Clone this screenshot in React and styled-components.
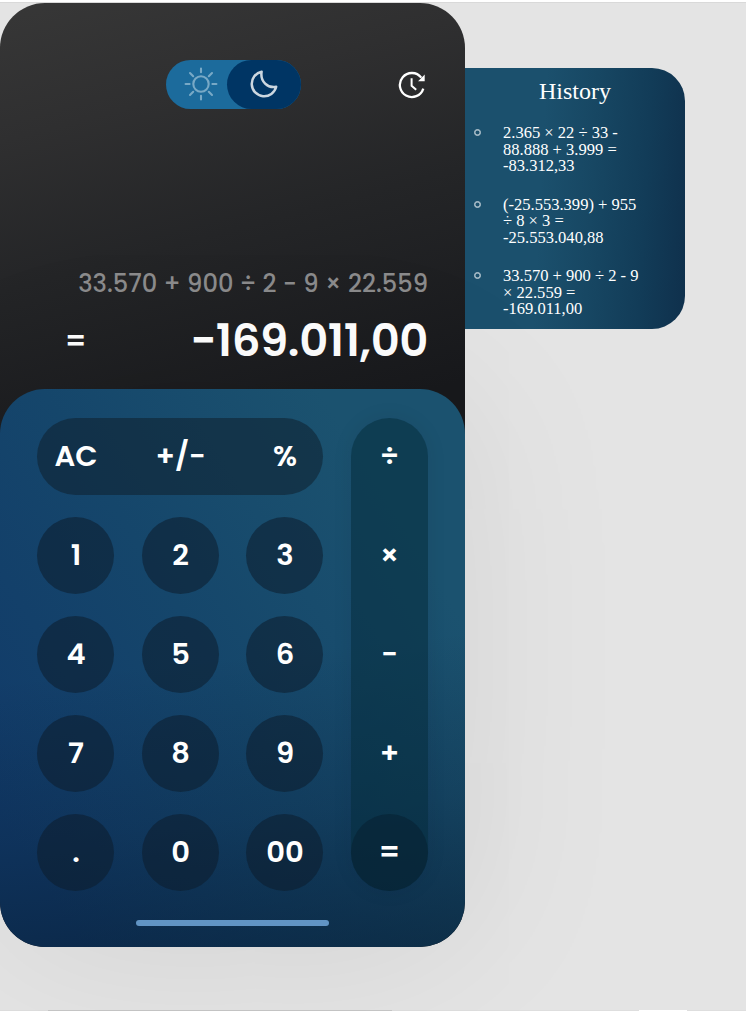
import React from "react";
import styled, { createGlobalStyle } from "styled-components";

const GlobalStyle = createGlobalStyle`
  *, *::before, *::after { box-sizing: border-box; }
  body { margin: 0; background: #e4e4e4; }
  button { border: 0; padding: 0; background: none; color: inherit; font: inherit; }
`;

const Page = styled.main`
  display: grid;
  grid-template-rows: 1008px 1px;
  height: 1011px;
  overflow: hidden;
  border-top: 2px solid #fff;
  box-shadow: inset 0 1px #d9d9d9;
`;

const Stage = styled.div`
  display: flex;
  align-items: flex-start;
  padding-top: 1px;
`;

const Calculator = styled.section`
  position: relative;
  z-index: 1;
  flex: none;
  display: flex;
  flex-direction: column;
  width: 465px;
  height: 944px;
  border-radius: 45px;
  background: linear-gradient(165deg, #373737 0%, #2f2f30 13%, #242527 27%, #18191c 47%);
  color: #fff;
  font-family: Poppins, Inter, sans-serif;
`;

const Toolbar = styled.header`
  display: grid;
  grid-template-columns: 1fr 135px 1fr;
  align-items: center;
  height: 49px;
  margin-top: 57px;
  padding-left: 2px;
`;

const ThemeSwitch = styled.div`
  grid-column: 2;
  display: flex;
  height: 49px;
  border-radius: 25px;
  background: #1c6b9c;
`;

const ThemeOption = styled.button`
  display: flex;
  align-items: center;
  justify-content: center;
  width: ${({ $active }) => ($active ? "74px" : "61px")};
  padding-left: ${({ $active }) => ($active ? "0" : "9px")};
  padding-bottom: 1px;
  border-radius: 25px;
  background: ${({ $active }) => ($active ? "#003564" : "transparent")};
  color: ${({ $active }) => ($active ? "#ccd7e0" : "#78a9c6")};
`;

const HistoryButton = styled.button`
  justify-self: end;
  display: flex;
  margin-right: 39px;
`;

const Display = styled.div`
  display: flex;
  flex-direction: column;
  height: 280px;
  padding: 151px 37px 0 65px;
`;

const Expression = styled.div`
  align-self: flex-end;
  white-space: nowrap;
  font-size: 24.2px;
  line-height: 47px;
  height: 45px;
  font-weight: 500;
  color: #8b8b8c;
`;

const Result = styled.div`
  display: flex;
  justify-content: space-between;
  align-items: center;
  height: 72px;
  font-weight: 600;
  line-height: 72px;
`;

const Equals = styled.span`
  font-size: 29px;
`;

const Value = styled.output`
  font-size: 45px;
  letter-spacing: -0.4px;
`;

const Keypad = styled.div`
  display: grid;
  grid-template-columns: 286px 77px;
  grid-template-rows: 473px;
  justify-content: space-between;
  align-content: start;
  row-gap: 29px;
  height: 558px;
  padding: 29px 37px 0;
  border-radius: 45px;
  background:
    linear-gradient(174deg, rgba(4, 20, 36, 0) 48%, rgba(4, 20, 36, 0.2) 75%, rgba(4, 20, 36, 0.5) 100%),
    linear-gradient(58deg, #113a69 10%, #15466b 48%, #1b526f 82%);
  box-shadow: 0 0 175px rgba(0, 0, 0, 0.08);
  font-size: 29px;
  font-weight: 600;
`;

const KeyRows = styled.div`
  display: flex;
  flex-direction: column;
  justify-content: space-between;
`;

const KeyRow = styled.div`
  display: flex;
  justify-content: space-between;
  border-radius: 39px;
  background: ${({ $joined }) => ($joined ? "rgba(14, 31, 45, 0.54)" : "transparent")};
`;

const Key = styled.button`
  flex: none;
  width: 77px;
  height: 77px;
  padding-left: 1px;
  border-radius: 50%;
  line-height: 77px;
  background: ${({ $plain }) => ($plain ? "transparent" : "rgba(12, 29, 44, 0.56)")};
`;

const OperatorKey = styled(Key)`
  padding-left: 0;
  background: ${({ $plain }) => ($plain ? "transparent" : "rgba(6, 30, 46, 0.5)")};
`;

const OperatorColumn = styled.div`
  display: flex;
  flex-direction: column;
  justify-content: space-between;
  border-radius: 39px;
  background: rgba(5, 44, 61, 0.56);
  box-shadow: 0 0 20px rgba(0, 25, 40, 0.08);
`;

const HomeBar = styled.div`
  grid-column: 1 / -1;
  justify-self: center;
  width: 193px;
  height: 6px;
  border-radius: 3px;
  background: #6194c4;
`;

const HistoryPanel = styled.aside`
  width: 220px;
  height: 261px;
  margin-top: 65px;
  border-radius: 0 33px 33px 0;
  background: linear-gradient(93deg, #1b506d 35%, #174763 57%, #123c58 80%, #0f304c 100%);
  color: #fff;
  font-family: "Liberation Serif", serif;
`;

const HistoryTitle = styled.h2`
  margin: 0;
  padding-top: 9px;
  font-size: 24px;
  line-height: 28px;
  font-weight: 400;
  text-align: center;
`;

const HistoryList = styled.ul`
  display: flex;
  flex-direction: column;
  gap: 22px;
  margin: 20px 0 0;
  padding: 0;
  list-style: none;
`;

const HistoryItem = styled.li`
  display: flex;
  gap: 22px;
  padding-left: 9px;
  font-size: 16.55px;
  line-height: 16.5px;

  &::before {
    content: "";
    flex: none;
    width: 7px;
    height: 7px;
    margin-top: 4px;
    border: 1.5px solid #c3d2da;
    border-radius: 50%;
    box-shadow: inset 0 0 0 0.4px #c3d2da;
  }
`;

const HistoryText = styled.span`
  white-space: pre-line;
`;

const WindowEdge = styled.footer`
  height: 1px;
  background: linear-gradient(90deg, #dedede 48px, #c7c7c7 48px 392px, #dedede 392px 639px, #fff 639px 687px, #dedede 687px);
`;

const SunIcon = () => (
  <svg width="34" height="34" viewBox="0 0 34 34" fill="none" stroke="currentColor" strokeWidth="2.1" strokeLinecap="round">
    <circle cx="17" cy="17" r="7.7" />
    <path d="M17 1.6V5.2M17 28.8v3.6M1.6 17h4M28.4 17h4M6 6l3.2 3.2M24.8 24.8 28 28M28 6l-3.2 3.2M9.2 24.8 6 28" />
  </svg>
);

const MoonIcon = () => (
  <svg width="28" height="28" viewBox="0 0 28 28" fill="none" stroke="currentColor" strokeWidth="2.5" strokeLinejoin="round">
    <path d="M11.6 1.7A12.4 12.4 0 1 0 26.2 16.8C17.8 18.5 10 11.5 11.6 1.7Z" />
  </svg>
);

const ClockIcon = () => (
  <svg width="28" height="28" viewBox="0 0 28 28" fill="none" stroke="currentColor" strokeWidth="2.3">
    <path d="M25.3 17.6A12 12 0 1 1 23.3 6.6" />
    <path d="M13.6 7.2V14.7L18.2 18.7" strokeWidth="2" />
    <path d="M26.7 3.6V10.2H20.1Z" fill="currentColor" stroke="none" />
  </svg>
);

const digitRows = [["1", "2", "3"], ["4", "5", "6"], ["7", "8", "9"], [".", "0", "00"]];
const operators = ["÷", "×", "−", "+"];
const entries = [
  "2.365 × 22 ÷ 33 -\n88.888 + 3.999 =\n-83.312,33",
  "(-25.553.399) + 955\n÷ 8 × 3 =\n-25.553.040,88",
  "33.570 + 900 ÷ 2 - 9\n× 22.559 =\n-169.011,00",
];

export default function App() {
  return (
    <>
      <GlobalStyle />
      <Page>
        <Stage>
          <Calculator>
            <Toolbar>
              <ThemeSwitch>
                <ThemeOption aria-label="Light theme"><SunIcon /></ThemeOption>
                <ThemeOption $active aria-label="Dark theme"><MoonIcon /></ThemeOption>
              </ThemeSwitch>
              <HistoryButton aria-label="History"><ClockIcon /></HistoryButton>
            </Toolbar>
            <Display>
              <Expression>33.570 + 900 ÷ 2 − 9 × 22.559</Expression>
              <Result>
                <Equals>=</Equals>
                <Value>−169.011,00</Value>
              </Result>
            </Display>
            <Keypad>
              <KeyRows>
                <KeyRow $joined>
                  <Key $plain>AC</Key>
                  <Key $plain>+/−</Key>
                  <Key $plain>%</Key>
                </KeyRow>
                {digitRows.map((row) => (
                  <KeyRow key={row[0]}>
                    {row.map((digit) => <Key key={digit}>{digit}</Key>)}
                  </KeyRow>
                ))}
              </KeyRows>
              <OperatorColumn>
                {operators.map((sign) => <OperatorKey key={sign} $plain>{sign}</OperatorKey>)}
                <OperatorKey>=</OperatorKey>
              </OperatorColumn>
              <HomeBar />
            </Keypad>
          </Calculator>
          <HistoryPanel>
            <HistoryTitle>History</HistoryTitle>
            <HistoryList>
              {entries.map((entry) => (
                <HistoryItem key={entry}><HistoryText>{entry}</HistoryText></HistoryItem>
              ))}
            </HistoryList>
          </HistoryPanel>
        </Stage>
        <WindowEdge />
      </Page>
    </>
  );
}
